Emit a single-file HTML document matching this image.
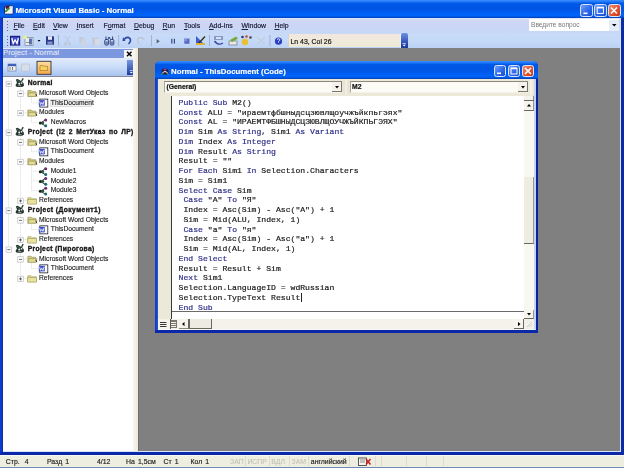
<!DOCTYPE html><html><head><meta charset="utf-8"><style>
*{box-sizing:border-box;margin:0;padding:0}
html,body{width:624px;height:468px;overflow:hidden;background:#808080;font-family:"Liberation Sans",sans-serif}
.a{position:absolute}
svg{position:absolute;overflow:visible}
.xpt{background:linear-gradient(#3d8eff 0,#1a74f6 2px,#0058e6 3.5px,#0055e3 9px,#005ef4 13px,#0066fc 15px,#0058e8 16.5px,#0040b0 18px)}
.ttl{position:absolute;color:#fff;font-weight:bold;white-space:nowrap}
.mi{position:absolute;top:22px;font-size:6.9px;line-height:8px;color:#1a1e3a;white-space:nowrap;-webkit-text-stroke:0.2px currentColor}
.st{position:absolute;top:458px;font-size:6.9px;line-height:8px;color:#202020;white-space:nowrap;word-spacing:1.2px;-webkit-text-stroke:0.15px currentColor}
.st.dis{color:#bcbaae;-webkit-text-stroke:0}
.tr{position:absolute;font-size:6.7px;color:#181818;white-space:nowrap;line-height:8px;-webkit-text-stroke:0.12px currentColor}
.tb{font-weight:bold;-webkit-text-stroke:0.35px currentColor}
.cl{position:absolute;font-family:"Liberation Mono",monospace;font-size:8.125px;color:#1a1a1a;white-space:pre;line-height:9.72px;-webkit-text-stroke:0.2px currentColor}
.k{color:#30308a}
.mi,.st,.tr,.cl,.ttl{will-change:opacity}
.btn{position:absolute;border-radius:2.5px;border:1px solid #dce6fa}
</style></head><body><div class="a xpt" style="left:0px;top:0px;width:624px;height:18px;"></div>
<svg style="left:4px;top:5px" width="10" height="10" viewBox="0 0 10 10"><rect x="0.5" y="0.8" width="8.7" height="8.4" rx="1" fill="#f4f6f0" stroke="#0c2a80" stroke-width="1"/><path d="M1 1 L6 0.8 L5 3.5 L2 4Z" fill="#4a1a40"/><path d="M1.2 6.8 L5.5 2.8" stroke="#3a8a2a" stroke-width="1.8"/><rect x="5.5" y="1.3" width="3.2" height="2" fill="#d0e0f0"/></svg>
<div class="ttl" style="position:absolute;left:15.5px;top:6.0px;font-size:7.9px;line-height:10px;-webkit-text-stroke:0.15px #fff">Microsoft Visual Basic - Normal</div>
<div class="btn" style="left:580px;top:4px;width:12.5px;height:13px;background:linear-gradient(135deg,#70a0ff,#2a64e8 60%,#1a50d0)"></div>
<div class="btn" style="left:594px;top:4px;width:12.5px;height:13px;background:linear-gradient(135deg,#70a0ff,#2a64e8 60%,#1a50d0)"></div>
<div class="btn" style="left:608px;top:4px;width:12.5px;height:13px;background:linear-gradient(135deg,#f09070,#e0502a 60%,#c83818)"></div>
<svg style="left:580px;top:4px" width="40" height="13"><rect x="3.5" y="8.5" width="4" height="1.6" fill="#fff"/><rect x="17.2" y="3.2" width="6.2" height="6.2" fill="none" stroke="#fff" stroke-width="1"/><rect x="17.2" y="3" width="6.2" height="1.4" fill="#fff"/><path d="M31 3.5 L37 9.5 M37 3.5 L31 9.5" stroke="#fff" stroke-width="1.6"/></svg>
<div class="a" style="left:0px;top:18px;width:624px;height:15px;background:linear-gradient(#e0e6fa 0,#d0d6f4 2px,#cad6f4 60%,#c6d8f6)"></div>
<div class="a" style="left:0px;top:33px;width:624px;height:15px;background:linear-gradient(#c8daf8,#c4d9f8 60%,#bcd2f4)"></div>
<div class="a" style="left:0px;top:18px;width:3px;height:437px;background:linear-gradient(90deg,#0a3cd4 0,#0a3cd4 60%,#14287a 100%)"></div>
<div class="a" style="left:619.5px;top:18px;width:2px;height:437px;background:#d8e4f8"></div>
<div class="a" style="left:621.3px;top:18px;width:2.7px;height:437px;background:#0a2aa8"></div>
<div class="a" style="left:6.5px;top:21px;width:1.2px;height:1.2px;background:#5a6aa0"></div>
<div class="a" style="left:6.5px;top:24px;width:1.2px;height:1.2px;background:#5a6aa0"></div>
<div class="a" style="left:6.5px;top:27px;width:1.2px;height:1.2px;background:#5a6aa0"></div>
<div class="a" style="left:6.5px;top:30px;width:1.2px;height:1.2px;background:#5a6aa0"></div>
<div class="a" style="left:6.5px;top:36px;width:1.2px;height:1.2px;background:#5a6aa0"></div>
<div class="a" style="left:6.5px;top:39px;width:1.2px;height:1.2px;background:#5a6aa0"></div>
<div class="a" style="left:6.5px;top:42px;width:1.2px;height:1.2px;background:#5a6aa0"></div>
<div class="a" style="left:6.5px;top:45px;width:1.2px;height:1.2px;background:#5a6aa0"></div>
<div class="mi" style="position:absolute;left:13.5px;top:22px;"><u>F</u>ile</div>
<div class="mi" style="position:absolute;left:33px;top:22px;"><u>E</u>dit</div>
<div class="mi" style="position:absolute;left:53px;top:22px;"><u>V</u>iew</div>
<div class="mi" style="position:absolute;left:76.5px;top:22px;"><u>I</u>nsert</div>
<div class="mi" style="position:absolute;left:103.5px;top:22px;">F<u>o</u>rmat</div>
<div class="mi" style="position:absolute;left:134px;top:22px;"><u>D</u>ebug</div>
<div class="mi" style="position:absolute;left:162.5px;top:22px;"><u>R</u>un</div>
<div class="mi" style="position:absolute;left:184px;top:22px;"><u>T</u>ools</div>
<div class="mi" style="position:absolute;left:209px;top:22px;"><u>A</u>dd-Ins</div>
<div class="mi" style="position:absolute;left:241.5px;top:22px;"><u>W</u>indow</div>
<div class="mi" style="position:absolute;left:274.5px;top:22px;"><u>H</u>elp</div>
<div class="a" style="left:529px;top:19px;width:90px;height:12px;background:#fff"></div>
<div class="mi" style="position:absolute;left:531px;top:21.2px;font-size:6.6px;line-height:8px;color:#7a7a7a;white-space:nowrap;-webkit-text-stroke:0">Введите вопрос</div>
<div class="a" style="left:609px;top:19.5px;width:9.5px;height:11px;background:#e4ecf8"></div>
<svg style="left:612px;top:24px" width="5" height="3"><path d="M0 0 H4.5 L2.25 2.5Z" fill="#000"/></svg>
<svg style="left:0;top:33px" width="300" height="15" viewBox="0 0 300 15">
<g>
<rect x="10" y="2.8" width="10.2" height="9.8" fill="#1a1a78"/>
<rect x="11" y="3.8" width="8.2" height="7.8" fill="#3c46c8"/>
<path d="M11.8 5 L13.2 10.5 L15.1 6.8 L17 10.5 L18.4 5" fill="none" stroke="#fff" stroke-width="1.3"/>
</g>
<g>
<rect x="25" y="4.5" width="8" height="8" fill="#e8ecf4" stroke="#7080a0" stroke-width="0.7"/>
<rect x="29" y="5.5" width="3" height="6" fill="#6070a8"/>
<rect x="26" y="9" width="3" height="1" fill="#80a070"/>
<circle cx="25" cy="4.2" r="2" fill="#e8ec90"/>
</g>
<path d="M37.5 7 H40.5 L39 8.8Z" fill="#000"/>
<g>
<rect x="46" y="3.3" width="8" height="8.4" fill="#2a3a8a"/>
<rect x="48" y="3.3" width="4" height="3.5" fill="#e8e8f8"/>
<rect x="47.5" y="8.5" width="5" height="3.2" fill="#8090c8"/>
</g>
<rect x="58" y="2" width="0.8" height="11" fill="#9aa8c8"/>
<g fill="none" stroke="#bcc4d4" stroke-width="0.9">
<path d="M65 3 L70 11 M70 3 L65 11"/>
<circle cx="65.5" cy="11" r="1.2"/><circle cx="69.5" cy="11" r="1.2"/>
</g>
<g fill="#b4bccc">
<rect x="79" y="4" width="4.5" height="6" fill="#c4ccdc"/><rect x="81.5" y="6.5" width="4.5" height="6" fill="#ccd4e2"/>
</g>
<g fill="#b4bccc">
<rect x="92" y="4.5" width="6" height="7.5" fill="#c4ccdc"/><rect x="95" y="6" width="5" height="6.5" fill="#d4dae6"/>
</g>
<g fill="none" stroke="#1e2c66" stroke-width="0.9">
<rect x="104.8" y="6.5" width="3.6" height="5.5" rx="1"/><rect x="110.2" y="6.5" width="3.6" height="5.5" rx="1"/><path d="M106 6.5 V3.5 M108 6.5 L109 4 L110.6 6.5 M112.6 6.5 V3.5"/>
</g><rect x="105.3" y="8.5" width="2.6" height="3" fill="#6a7ab0"/><rect x="110.7" y="8.5" width="2.6" height="3" fill="#6a7ab0"/>
<rect x="118.3" y="2" width="0.8" height="11" fill="#9aa8c8"/>
<path d="M124 6.5 Q127 3 130 5.5 Q131.5 8 128.5 11" fill="none" stroke="#2a46a8" stroke-width="1.6"/>
<path d="M123 4 L125.5 8 L122.5 8Z" fill="#2a46a8"/>
<path d="M144 6.5 Q141 3 138 5.5 Q136.5 8 139.5 11" fill="none" stroke="#bcc4d8" stroke-width="1.3"/>
<rect x="151.2" y="2" width="0.8" height="11" fill="#9aa8c8"/>
<path d="M156.6 6 L159.8 8.2 L156.6 10.4Z" fill="#5a6478"/>
<rect x="171.2" y="5.8" width="1.2" height="4.8" fill="#3a4a80"/><rect x="173.8" y="5.8" width="1.2" height="4.8" fill="#3a4a80"/>
<rect x="184.3" y="5.6" width="5.2" height="5.2" fill="#5a6ac8"/><rect x="184.3" y="5.6" width="2.5" height="2.5" fill="#8898e0"/>
<path d="M196 3 V12 H205 Z" fill="#3a5ad8"/>
<path d="M198 11 L205 3.5" stroke="#303010" stroke-width="1.4"/>
<rect x="196" y="10" width="9" height="2" fill="#e0b030"/>
<rect x="209.2" y="2" width="0.8" height="11" fill="#9aa8c8"/>
<g>
<rect x="214" y="3" width="9" height="4" fill="#8898c8"/>
<path d="M214.5 8 Q218 13 223 10" fill="none" stroke="#3a4aa0" stroke-width="1.4"/>
<rect x="216" y="4" width="5" height="2" fill="#d8e0f0"/>
</g>
<g>
<rect x="229" y="8" width="8" height="4" fill="#e8e8e0" stroke="#5a6a80" stroke-width="0.6"/>
<path d="M230 7 L236 3.5 L238 5.5 L232 9Z" fill="#78a838"/>
</g>
<g>
<circle cx="245" cy="9" r="3.2" fill="#e8c030"/>
<circle cx="242.5" cy="4" r="1.3" fill="#2a3a8a"/><circle cx="246.5" cy="3.5" r="1.3" fill="#c05030"/><circle cx="250.5" cy="4.5" r="1.3" fill="#604040"/>
</g>
<g fill="none" stroke="#c4ccdc" stroke-width="1.1">
<path d="M257 4 L265 11 M265 4 L257 11"/>
</g>
<rect x="269.5" y="2" width="0.8" height="11" fill="#9aa8c8"/>
<circle cx="278.5" cy="8.2" r="3.6" fill="#2840c0"/>
<path d="M277 6.5 Q278.5 5 280 6.5 Q280 7.5 278.5 8.5 V9.5" fill="none" stroke="#fff" stroke-width="0.9"/>
</svg>
<div class="a" style="left:288.3px;top:34.1px;width:112px;height:12.5px;background:linear-gradient(#f2e6dc,#f0eadc 50%,#ece8d6);border-left:0.8px solid #d8d4c4"></div>
<div class="a" style="left:400.3px;top:33.5px;width:1px;height:14.5px;background:#eef2fa"></div>
<div class="mi" style="position:absolute;left:290.5px;top:38.0px;font-size:6.9px;line-height:8px;white-space:nowrap;color:#1a1a1a">Ln 43, Col 26</div>
<div class="a" style="left:401px;top:32.9px;width:7px;height:15.4px;background:linear-gradient(#6e90e0,#2a4cb0 70%,#1a3898);border-radius:2px 2px 0 0"></div>
<svg style="left:402.3px;top:42.5px" width="5" height="5"><path d="M0.5 0.5 H3.8" stroke="#fff" stroke-width="0.7"/><path d="M0.6 1.8 H3.8 L2.2 3.6Z" fill="#fff"/></svg>
<div class="a" style="left:3px;top:48px;width:131px;height:10px;background:#7b97df"></div>
<div class="" style="position:absolute;left:3px;top:49.2px;font-size:7.75px;line-height:8px;color:#eef0fa;white-space:nowrap">Project - Normal</div>
<div class="a" style="left:124px;top:49.5px;width:9.5px;height:8.5px;background:#f6f6f6"></div>
<svg style="left:125.5px;top:51px" width="7" height="6"><path d="M1 0.8 L5.5 5.2 M5.5 0.8 L1 5.2" stroke="#000" stroke-width="1.5"/></svg>
<div class="a" style="left:3px;top:47.8px;width:131px;height:1px;background:#e4ecfa"></div>
<div class="a" style="left:3px;top:58px;width:131px;height:17.5px;background:linear-gradient(#e2ebfc,#cadcf8 50%,#a7c3ee)"></div>
<div class="a" style="left:127.4px;top:60px;width:6.4px;height:15px;background:linear-gradient(#7898e0,#1e3c9c);border-radius:0 2px 2px 0"></div>
<svg style="left:128.5px;top:69.5px" width="5" height="5"><path d="M0.8 0.6 H3.8" stroke="#fff" stroke-width="0.7"/><path d="M0.8 2 H3.8 L2.3 3.6Z" fill="#fff"/></svg>
<div class="a" style="left:3px;top:75.5px;width:130px;height:376px;background:#fff"></div>
<div class="a" style="left:3px;top:75.5px;width:131px;height:1px;background:#8a8aa0"></div>
<svg style="left:0;top:58px" width="60" height="18" viewBox="0 0 60 18">
<rect x="8" y="6" width="8" height="7" fill="#f4f0e0" stroke="#5870b0" stroke-width="0.6"/>
<rect x="8" y="6" width="8" height="2.2" fill="#4060c0"/>
<rect x="9.5" y="9" width="1" height="3" fill="#7080a0"/><rect x="12" y="9" width="1" height="3" fill="#7080a0"/>
<rect x="21.5" y="6" width="8" height="7" fill="#d8dee8" stroke="#b8c0d0" stroke-width="0.6"/>
<rect x="37" y="3.3" width="14" height="13" fill="url(#og)" stroke="#303040" stroke-width="0.9"/>
<defs><linearGradient id="og" x1="0" y1="0" x2="0" y2="1"><stop offset="0" stop-color="#ffe0a0"/><stop offset="1" stop-color="#f4a848"/></linearGradient></defs>
<path d="M40 7.5 H43 L44 8.3 H47.5 V12.5 H40Z" fill="#f8d060" stroke="#806020" stroke-width="0.5"/>
</svg>
<div class="a" style="left:133px;top:48px;width:5px;height:403.5px;background:linear-gradient(90deg,#f8f6ee,#eee9dc)"></div>
<div class="a" style="left:137.6px;top:48px;width:0.9px;height:403.5px;background:#707068"></div>
<div class="a" style="left:155px;top:61px;width:383px;height:272.2px;background:linear-gradient(90deg,#0a38c4,#2a5ad8 3.5px,#0842d6 4px);border-radius:5px 5px 0 0"></div>
<div class="a xpt" style="left:155px;top:61px;width:383px;height:18px;border-radius:5px 5px 0 0"></div>
<svg style="left:161px;top:66.5px" width="9" height="9"><path d="M0.8 2.5 Q4 0.5 7.2 2.5 L7.5 7.5 L0.5 7.5Z" fill="#281c3c"/><path d="M2 2.2 Q4 1 6 2.2 L4 4Z" fill="#8a3a9a"/><path d="M1.5 5.5 Q4 3.5 6.5 5.5" stroke="#f0f0f0" stroke-width="1" fill="none"/><path d="M0.5 7.5 L2.5 6 M7.5 7.5 L5.5 6" stroke="#70c060" stroke-width="1"/></svg>
<div class="ttl" style="position:absolute;left:171px;top:66.8px;font-size:7.8px;line-height:9px;-webkit-text-stroke:0.15px #fff">Normal - ThisDocument (Code)</div>
<div class="btn" style="left:494px;top:65.3px;width:12px;height:12px;background:linear-gradient(135deg,#70a0ff,#2a64e8 60%,#1a50d0)"></div>
<div class="btn" style="left:508px;top:65.3px;width:12px;height:12px;background:linear-gradient(135deg,#70a0ff,#2a64e8 60%,#1a50d0)"></div>
<div class="btn" style="left:522px;top:65.3px;width:12px;height:12px;background:linear-gradient(135deg,#f09070,#e0502a 60%,#c83818)"></div>
<svg style="left:494px;top:65.3px" width="40" height="12"><rect x="3" y="7.5" width="4" height="1.6" fill="#fff"/><rect x="17" y="3" width="6" height="6" fill="none" stroke="#fff" stroke-width="1"/><rect x="17" y="2.8" width="6" height="1.4" fill="#fff"/><path d="M31 3 L37 9 M37 3 L31 9" stroke="#fff" stroke-width="1.6"/></svg>
<div class="a" style="left:158px;top:79px;width:377px;height:252px;background:#ece9d8"></div>
<div class="a" style="left:533.8px;top:79px;width:2.2px;height:252px;background:#c4d2fc"></div>
<div class="a" style="left:536px;top:79px;width:2.2px;height:254.2px;background:#0a24a0"></div>
<div class="a" style="left:158px;top:329.2px;width:378px;height:1.2px;background:#dde6fc"></div>
<div class="a" style="left:155px;top:330.4px;width:383px;height:2.8px;background:#0a28a8"></div>
<div class="a" style="left:164px;top:81px;width:178px;height:11.5px;background:#fcfbf6;border-top:1px solid #8a887c;border-left:1px solid #a8a69a;border-bottom:1px solid #f4f2ea"></div>
<div class="mi" style="position:absolute;left:166.5px;top:82.8px;font-size:6.8px;line-height:8px;font-weight:bold;white-space:nowrap;color:#101010;-webkit-text-stroke:0.2px #101010">(General)</div>
<div class="a" style="left:349.5px;top:81px;width:178.5px;height:11.5px;background:#fcfbf6;border-top:1px solid #8a887c;border-left:1px solid #a8a69a;border-bottom:1px solid #f4f2ea"></div>
<div class="mi" style="position:absolute;left:352.0px;top:82.8px;font-size:6.8px;line-height:8px;font-weight:bold;white-space:nowrap;color:#101010;-webkit-text-stroke:0.2px #101010">M2</div>
<div class="a" style="left:331.5px;top:81.8px;width:10px;height:10.5px;background:#f4f2ea;border-right:1px solid #7a786c;border-bottom:1px solid #7a786c"></div>
<svg style="left:334.5px;top:85.5px" width="5" height="3"><path d="M0 0 H4 L2 2.5Z" fill="#000"/></svg>
<div class="a" style="left:518px;top:81.8px;width:10px;height:10.5px;background:#f4f2ea;border-right:1px solid #7a786c;border-bottom:1px solid #7a786c"></div>
<svg style="left:521px;top:85.5px" width="5" height="3"><path d="M0 0 H4 L2 2.5Z" fill="#000"/></svg>
<div class="a" style="left:342px;top:80px;width:7.5px;height:14px;background:#e8e5d6"></div>
<div class="a" style="left:344.5px;top:80px;width:2px;height:14px;background:#f2f0e6"></div>
<div class="a" style="left:529.5px;top:80px;width:2px;height:15px;background:#f4f2ea"></div>
<div class="a" style="left:158px;top:95.5px;width:376px;height:0.9px;background:#6a685e"></div>
<div class="a" style="left:158px;top:96.3px;width:13.5px;height:223px;background:#ece9d8"></div>
<div class="a" style="left:171.2px;top:96.3px;width:1px;height:223px;background:#3a3a3a"></div>
<div class="a" style="left:172.2px;top:96.3px;width:352px;height:223px;background:#fff"></div>
<div class="a" style="left:172.2px;top:310.9px;width:351.5px;height:0.8px;background:#6a6a6a"></div>
<div class="a" style="left:524px;top:96.3px;width:10px;height:223px;background:#f8f7f0"></div>
<div class="a" style="left:524px;top:96.3px;width:9.5px;height:4.5px;background:#f4f2ea;border-bottom:1px solid #6a685e;border-right:1px solid #8a887c"></div>
<div class="a" style="left:524px;top:101px;width:9.5px;height:9.8px;background:#f6f4ec;border-right:1px solid #9a988c;border-bottom:1px solid #6a685e"></div>
<svg style="left:526.8px;top:104.3px" width="5" height="3"><path d="M0 2.5 H4 L2 0Z" fill="#000"/></svg>
<div class="a" style="left:524px;top:177px;width:9.8px;height:66.5px;background:#efede2;border-right:1px solid #9a988c;border-bottom:1px solid #6a685e"></div>
<div class="a" style="left:524px;top:309.5px;width:9.5px;height:9.5px;background:#f6f4ec;border-right:1px solid #9a988c;border-bottom:1px solid #6a685e"></div>
<svg style="left:526.8px;top:312.8px" width="5" height="3"><path d="M0 0 H4 L2 2.5Z" fill="#000"/></svg>
<div class="a" style="left:158px;top:319.3px;width:366px;height:9.5px;background:#f4f2ea"></div>
<div class="a" style="left:158px;top:328.8px;width:376px;height:1.5px;background:#f8f7f2"></div>
<svg style="left:158px;top:319px" width="20" height="10"><path d="M2 3.5 H8.5 M2 5.5 H8.5 M2 7.5 H8.5" stroke="#383838" stroke-width="1"/><rect x="12" y="1" width="7" height="8" fill="#7a786c"/><path d="M13 3.5 H18 M13 5.5 H18 M13 7.5 H18" stroke="#f4f4ec" stroke-width="1"/></svg>
<div class="a" style="left:169.5px;top:319.3px;width:1px;height:9.5px;background:#5a5a5a"></div>
<div class="a" style="left:179px;top:319.3px;width:10.3px;height:9.5px;background:#f6f4ec;border-right:1px solid #6a685e;border-bottom:1px solid #8a887c"></div>
<svg style="left:182.3px;top:321.8px" width="3" height="5"><path d="M2.5 0 V4.2 L0 2.1Z" fill="#000"/></svg>
<div class="a" style="left:189.3px;top:319.3px;width:22.5px;height:9.5px;background:#eeece2;border-left:1px solid #6a685e;border-right:1px solid #6a685e;border-bottom:1px solid #6a685e"></div>
<div class="a" style="left:514.2px;top:319.3px;width:10px;height:9.8px;background:#f6f4ec;border-right:1px solid #6a685e;border-bottom:1px solid #6a685e"></div>
<svg style="left:518.3px;top:321.8px" width="3" height="5"><path d="M0 0 V4.2 L2.5 2.1Z" fill="#000"/></svg>
<div class="a" style="left:524.2px;top:319.3px;width:9.8px;height:9.8px;background:#f2f0e8"></div>
<svg style="left:526px;top:321px" width="7" height="7"><path d="M6 1 L1 6 M6 3.5 L3.5 6" stroke="#c8c4b4" stroke-width="0.8"/></svg>
<div class="cl" style="position:absolute;left:178.6px;top:97.8px;"><span class="k">Public</span> <span class="k">Sub</span> M2()</div>
<div class="cl" style="position:absolute;left:178.6px;top:107.55px;"><span class="k">Const</span> ALU = &quot;ираемтфбшныдсцзювлщоучжъйкпьгэях&quot;</div>
<div class="cl" style="position:absolute;left:178.6px;top:117.3px;"><span class="k">Const</span> AL = &quot;ИРАЕМТФБШНЫДСЦЗЮВЛЩОУЧЖЪЙКПЬГЭЯХ&quot;</div>
<div class="cl" style="position:absolute;left:178.6px;top:127.05px;"><span class="k">Dim</span> Sim <span class="k">As</span> <span class="k">String</span>, Sim1 <span class="k">As</span> <span class="k">Variant</span></div>
<div class="cl" style="position:absolute;left:178.6px;top:136.8px;"><span class="k">Dim</span> Index <span class="k">As</span> <span class="k">Integer</span></div>
<div class="cl" style="position:absolute;left:178.6px;top:146.55px;"><span class="k">Dim</span> Result <span class="k">As</span> <span class="k">String</span></div>
<div class="cl" style="position:absolute;left:178.6px;top:156.3px;">Result = &quot;&quot;</div>
<div class="cl" style="position:absolute;left:178.6px;top:166.05px;"><span class="k">For</span> <span class="k">Each</span> Sim1 <span class="k">In</span> Selection.Characters</div>
<div class="cl" style="position:absolute;left:178.6px;top:175.8px;">Sim = Sim1</div>
<div class="cl" style="position:absolute;left:178.6px;top:185.55px;"><span class="k">Select</span> <span class="k">Case</span> Sim</div>
<div class="cl" style="position:absolute;left:178.6px;top:195.3px;"> <span class="k">Case</span> &quot;А&quot; <span class="k">To</span> &quot;Я&quot;</div>
<div class="cl" style="position:absolute;left:178.6px;top:205.05px;"> Index = Asc(Sim) - Asc(&quot;А&quot;) + 1</div>
<div class="cl" style="position:absolute;left:178.6px;top:214.8px;"> Sim = Mid(ALU, Index, 1)</div>
<div class="cl" style="position:absolute;left:178.6px;top:224.55px;"> <span class="k">Case</span> &quot;а&quot; <span class="k">To</span> &quot;я&quot;</div>
<div class="cl" style="position:absolute;left:178.6px;top:234.3px;"> Index = Asc(Sim) - Asc(&quot;а&quot;) + 1</div>
<div class="cl" style="position:absolute;left:178.6px;top:244.05px;"> Sim = Mid(AL, Index, 1)</div>
<div class="cl" style="position:absolute;left:178.6px;top:253.8px;"><span class="k">End</span> <span class="k">Select</span></div>
<div class="cl" style="position:absolute;left:178.6px;top:263.55px;">Result = Result + Sim</div>
<div class="cl" style="position:absolute;left:178.6px;top:273.3px;"><span class="k">Next</span> Sim1</div>
<div class="cl" style="position:absolute;left:178.6px;top:283.05px;">Selection.LanguageID = wdRussian</div>
<div class="cl" style="position:absolute;left:178.6px;top:292.8px;">Selection.TypeText Result</div>
<div class="cl" style="position:absolute;left:178.6px;top:302.55px;"><span class="k">End</span> <span class="k">Sub</span></div>
<div class="a" style="left:300.77500000000003px;top:293.0px;width:0.7px;height:9.3px;background:#222"></div>
<div class="a" style="left:50px;top:98.7px;width:42px;height:8.3px;background:#f0f0f0;border:0.6px solid #e0e0e0"></div>
<svg style="left:0;top:0" width="140" height="300" viewBox="0 0 140 300"><line x1="8.5" y1="86.4" x2="8.5" y2="246.15" stroke="#dcdcdc" stroke-width="0.8" stroke-dasharray="1 0.5"/><line x1="20.5" y1="87.4" x2="20.5" y2="109.65" stroke="#dcdcdc" stroke-width="0.8" stroke-dasharray="1 0.5"/><line x1="23.5" y1="93.15" x2="27.5" y2="93.15" stroke="#dcdcdc" stroke-width="0.8" stroke-dasharray="1 0.5"/><line x1="31.5" y1="97.15" x2="31.5" y2="102.9" stroke="#dcdcdc" stroke-width="0.8" stroke-dasharray="1 0.5"/><line x1="31.5" y1="102.9" x2="38" y2="102.9" stroke="#dcdcdc" stroke-width="0.8" stroke-dasharray="1 0.5"/><line x1="23.5" y1="112.65" x2="27.5" y2="112.65" stroke="#dcdcdc" stroke-width="0.8" stroke-dasharray="1 0.5"/><line x1="31.5" y1="116.65" x2="31.5" y2="122.4" stroke="#dcdcdc" stroke-width="0.8" stroke-dasharray="1 0.5"/><line x1="31.5" y1="122.4" x2="38" y2="122.4" stroke="#dcdcdc" stroke-width="0.8" stroke-dasharray="1 0.5"/><line x1="20.5" y1="136.15" x2="20.5" y2="197.4" stroke="#dcdcdc" stroke-width="0.8" stroke-dasharray="1 0.5"/><line x1="23.5" y1="141.9" x2="27.5" y2="141.9" stroke="#dcdcdc" stroke-width="0.8" stroke-dasharray="1 0.5"/><line x1="31.5" y1="145.9" x2="31.5" y2="151.65" stroke="#dcdcdc" stroke-width="0.8" stroke-dasharray="1 0.5"/><line x1="31.5" y1="151.65" x2="38" y2="151.65" stroke="#dcdcdc" stroke-width="0.8" stroke-dasharray="1 0.5"/><line x1="23.5" y1="161.4" x2="27.5" y2="161.4" stroke="#dcdcdc" stroke-width="0.8" stroke-dasharray="1 0.5"/><line x1="31.5" y1="165.4" x2="31.5" y2="190.65" stroke="#dcdcdc" stroke-width="0.8" stroke-dasharray="1 0.5"/><line x1="31.5" y1="171.15" x2="38" y2="171.15" stroke="#dcdcdc" stroke-width="0.8" stroke-dasharray="1 0.5"/><line x1="31.5" y1="180.9" x2="38" y2="180.9" stroke="#dcdcdc" stroke-width="0.8" stroke-dasharray="1 0.5"/><line x1="31.5" y1="190.65" x2="38" y2="190.65" stroke="#dcdcdc" stroke-width="0.8" stroke-dasharray="1 0.5"/><line x1="23.5" y1="200.4" x2="27.5" y2="200.4" stroke="#dcdcdc" stroke-width="0.8" stroke-dasharray="1 0.5"/><line x1="20.5" y1="214.15" x2="20.5" y2="236.4" stroke="#dcdcdc" stroke-width="0.8" stroke-dasharray="1 0.5"/><line x1="23.5" y1="219.9" x2="27.5" y2="219.9" stroke="#dcdcdc" stroke-width="0.8" stroke-dasharray="1 0.5"/><line x1="31.5" y1="223.9" x2="31.5" y2="229.65" stroke="#dcdcdc" stroke-width="0.8" stroke-dasharray="1 0.5"/><line x1="31.5" y1="229.65" x2="38" y2="229.65" stroke="#dcdcdc" stroke-width="0.8" stroke-dasharray="1 0.5"/><line x1="23.5" y1="239.4" x2="27.5" y2="239.4" stroke="#dcdcdc" stroke-width="0.8" stroke-dasharray="1 0.5"/><line x1="20.5" y1="253.15" x2="20.5" y2="275.4" stroke="#dcdcdc" stroke-width="0.8" stroke-dasharray="1 0.5"/><line x1="23.5" y1="258.9" x2="27.5" y2="258.9" stroke="#dcdcdc" stroke-width="0.8" stroke-dasharray="1 0.5"/><line x1="31.5" y1="262.9" x2="31.5" y2="268.65" stroke="#dcdcdc" stroke-width="0.8" stroke-dasharray="1 0.5"/><line x1="31.5" y1="268.65" x2="38" y2="268.65" stroke="#dcdcdc" stroke-width="0.8" stroke-dasharray="1 0.5"/><line x1="23.5" y1="278.4" x2="27.5" y2="278.4" stroke="#dcdcdc" stroke-width="0.8" stroke-dasharray="1 0.5"/><rect x="6.1000000000000005" y="81.2" width="5.4" height="5.4" fill="#fff" stroke="#b0b0b8" stroke-width="0.6"/><line x1="7.300000000000001" y1="83.9" x2="10.3" y2="83.9" stroke="#303030" stroke-width="0.7"/><g transform="translate(14.8,78.9)"><path d="M8.4 -0.6 L6.8 2.2" stroke="#2a4a30" stroke-width="1.4"/><path d="M1 0.6 L2.8 0 L7.5 2.8 Q9.4 4.5 9.2 6.5 Q8.6 8.2 5 8.2 Q1 8.2 0.8 6.6 Q0.8 5 2.2 4 Z" fill="#263430"/><path d="M1.8 1.2 L5.5 3.6" stroke="#4a7a5a" stroke-width="0.8"/><circle cx="4.4" cy="4.9" r="0.95" fill="#f4f8f4"/><circle cx="6.8" cy="4.1" r="0.85" fill="#f4f8f4"/><path d="M3.4 6.8 H6.6" stroke="#a8bcb0" stroke-width="0.7"/></g><rect x="17.8" y="90.95" width="5.4" height="5.4" fill="#fff" stroke="#b0b0b8" stroke-width="0.6"/><line x1="19.0" y1="93.65" x2="22.0" y2="93.65" stroke="#303030" stroke-width="0.7"/><g transform="translate(27.3,88.95)"><path d="M0.5 1.5 H3.8 L4.8 2.5 H8.5 V7.5 H0.5Z" fill="#ccc680" stroke="#8a8448" stroke-width="0.5"/><path d="M1.8 4 H9.8 L8.5 7.5 H0.5Z" fill="#e2dc98" stroke="#8a8448" stroke-width="0.5"/><path d="M8.5 5 L9.5 7.5" stroke="#303020" stroke-width="1"/></g><g transform="translate(38.3,98.60000000000001)"><rect x="1.5" y="0.5" width="8" height="8" fill="#fff" stroke="#202030" stroke-width="0.8"/><rect x="0.5" y="1.5" width="6" height="5.5" fill="#4050c8"/><path d="M1.3 2.5 L2.3 6 L3.5 3.8 L4.7 6 L5.7 2.5" fill="none" stroke="#fff" stroke-width="0.8"/></g><rect x="17.8" y="110.45" width="5.4" height="5.4" fill="#fff" stroke="#b0b0b8" stroke-width="0.6"/><line x1="19.0" y1="113.15" x2="22.0" y2="113.15" stroke="#303030" stroke-width="0.7"/><g transform="translate(27.3,108.45)"><path d="M0.5 1.5 H3.8 L4.8 2.5 H8.5 V7.5 H0.5Z" fill="#ccc680" stroke="#8a8448" stroke-width="0.5"/><path d="M1.8 4 H9.8 L8.5 7.5 H0.5Z" fill="#e2dc98" stroke="#8a8448" stroke-width="0.5"/><path d="M8.5 5 L9.5 7.5" stroke="#303020" stroke-width="1"/></g><g transform="translate(38.5,118.10000000000001)"><path d="M1.8 5 L7 1.8 M1.8 5 L7 7.8" stroke="#304040" stroke-width="1"/><circle cx="1.8" cy="5" r="1.5" fill="#1a2420"/><circle cx="4.4" cy="4.8" r="1.3" fill="#2a5a40"/><circle cx="7.2" cy="1.9" r="1.5" fill="#6a2a6a"/><circle cx="7.2" cy="7.6" r="1.5" fill="#1a6a6a"/></g><rect x="6.1000000000000005" y="129.95000000000002" width="5.4" height="5.4" fill="#fff" stroke="#b0b0b8" stroke-width="0.6"/><line x1="7.300000000000001" y1="132.65" x2="10.3" y2="132.65" stroke="#303030" stroke-width="0.7"/><g transform="translate(14.8,127.65)"><path d="M8.4 -0.6 L6.8 2.2" stroke="#2a4a30" stroke-width="1.4"/><path d="M1 0.6 L2.8 0 L7.5 2.8 Q9.4 4.5 9.2 6.5 Q8.6 8.2 5 8.2 Q1 8.2 0.8 6.6 Q0.8 5 2.2 4 Z" fill="#263430"/><path d="M1.8 1.2 L5.5 3.6" stroke="#4a7a5a" stroke-width="0.8"/><circle cx="4.4" cy="4.9" r="0.95" fill="#f4f8f4"/><circle cx="6.8" cy="4.1" r="0.85" fill="#f4f8f4"/><path d="M3.4 6.8 H6.6" stroke="#a8bcb0" stroke-width="0.7"/></g><rect x="17.8" y="139.70000000000002" width="5.4" height="5.4" fill="#fff" stroke="#b0b0b8" stroke-width="0.6"/><line x1="19.0" y1="142.4" x2="22.0" y2="142.4" stroke="#303030" stroke-width="0.7"/><g transform="translate(27.3,137.70000000000002)"><path d="M0.5 1.5 H3.8 L4.8 2.5 H8.5 V7.5 H0.5Z" fill="#ccc680" stroke="#8a8448" stroke-width="0.5"/><path d="M1.8 4 H9.8 L8.5 7.5 H0.5Z" fill="#e2dc98" stroke="#8a8448" stroke-width="0.5"/><path d="M8.5 5 L9.5 7.5" stroke="#303020" stroke-width="1"/></g><g transform="translate(38.3,147.35)"><rect x="1.5" y="0.5" width="8" height="8" fill="#fff" stroke="#202030" stroke-width="0.8"/><rect x="0.5" y="1.5" width="6" height="5.5" fill="#4050c8"/><path d="M1.3 2.5 L2.3 6 L3.5 3.8 L4.7 6 L5.7 2.5" fill="none" stroke="#fff" stroke-width="0.8"/></g><rect x="17.8" y="159.20000000000002" width="5.4" height="5.4" fill="#fff" stroke="#b0b0b8" stroke-width="0.6"/><line x1="19.0" y1="161.9" x2="22.0" y2="161.9" stroke="#303030" stroke-width="0.7"/><g transform="translate(27.3,157.20000000000002)"><path d="M0.5 1.5 H3.8 L4.8 2.5 H8.5 V7.5 H0.5Z" fill="#ccc680" stroke="#8a8448" stroke-width="0.5"/><path d="M1.8 4 H9.8 L8.5 7.5 H0.5Z" fill="#e2dc98" stroke="#8a8448" stroke-width="0.5"/><path d="M8.5 5 L9.5 7.5" stroke="#303020" stroke-width="1"/></g><g transform="translate(38.5,166.85)"><path d="M1.8 5 L7 1.8 M1.8 5 L7 7.8" stroke="#304040" stroke-width="1"/><circle cx="1.8" cy="5" r="1.5" fill="#1a2420"/><circle cx="4.4" cy="4.8" r="1.3" fill="#2a5a40"/><circle cx="7.2" cy="1.9" r="1.5" fill="#6a2a6a"/><circle cx="7.2" cy="7.6" r="1.5" fill="#1a6a6a"/></g><g transform="translate(38.5,176.6)"><path d="M1.8 5 L7 1.8 M1.8 5 L7 7.8" stroke="#304040" stroke-width="1"/><circle cx="1.8" cy="5" r="1.5" fill="#1a2420"/><circle cx="4.4" cy="4.8" r="1.3" fill="#2a5a40"/><circle cx="7.2" cy="1.9" r="1.5" fill="#6a2a6a"/><circle cx="7.2" cy="7.6" r="1.5" fill="#1a6a6a"/></g><g transform="translate(38.5,186.35)"><path d="M1.8 5 L7 1.8 M1.8 5 L7 7.8" stroke="#304040" stroke-width="1"/><circle cx="1.8" cy="5" r="1.5" fill="#1a2420"/><circle cx="4.4" cy="4.8" r="1.3" fill="#2a5a40"/><circle cx="7.2" cy="1.9" r="1.5" fill="#6a2a6a"/><circle cx="7.2" cy="7.6" r="1.5" fill="#1a6a6a"/></g><rect x="17.8" y="198.20000000000002" width="5.4" height="5.4" fill="#fff" stroke="#b0b0b8" stroke-width="0.6"/><line x1="19.0" y1="200.9" x2="22.0" y2="200.9" stroke="#303030" stroke-width="0.7"/><line x1="20.5" y1="199.4" x2="20.5" y2="202.4" stroke="#303030" stroke-width="0.7"/><g transform="translate(27.3,196.20000000000002)"><path d="M0.5 1.5 H3.8 L4.8 2.5 H9 V7.8 H0.5Z" fill="#dcd68a" stroke="#9a9450" stroke-width="0.5"/><rect x="0.5" y="3.5" width="8.5" height="4.3" fill="#e8e29a" stroke="#9a9450" stroke-width="0.5"/></g><rect x="6.1000000000000005" y="207.95000000000002" width="5.4" height="5.4" fill="#fff" stroke="#b0b0b8" stroke-width="0.6"/><line x1="7.300000000000001" y1="210.65" x2="10.3" y2="210.65" stroke="#303030" stroke-width="0.7"/><g transform="translate(14.8,205.65)"><path d="M8.4 -0.6 L6.8 2.2" stroke="#2a4a30" stroke-width="1.4"/><path d="M1 0.6 L2.8 0 L7.5 2.8 Q9.4 4.5 9.2 6.5 Q8.6 8.2 5 8.2 Q1 8.2 0.8 6.6 Q0.8 5 2.2 4 Z" fill="#263430"/><path d="M1.8 1.2 L5.5 3.6" stroke="#4a7a5a" stroke-width="0.8"/><circle cx="4.4" cy="4.9" r="0.95" fill="#f4f8f4"/><circle cx="6.8" cy="4.1" r="0.85" fill="#f4f8f4"/><path d="M3.4 6.8 H6.6" stroke="#a8bcb0" stroke-width="0.7"/></g><rect x="17.8" y="217.70000000000002" width="5.4" height="5.4" fill="#fff" stroke="#b0b0b8" stroke-width="0.6"/><line x1="19.0" y1="220.4" x2="22.0" y2="220.4" stroke="#303030" stroke-width="0.7"/><g transform="translate(27.3,215.70000000000002)"><path d="M0.5 1.5 H3.8 L4.8 2.5 H8.5 V7.5 H0.5Z" fill="#ccc680" stroke="#8a8448" stroke-width="0.5"/><path d="M1.8 4 H9.8 L8.5 7.5 H0.5Z" fill="#e2dc98" stroke="#8a8448" stroke-width="0.5"/><path d="M8.5 5 L9.5 7.5" stroke="#303020" stroke-width="1"/></g><g transform="translate(38.3,225.35)"><rect x="1.5" y="0.5" width="8" height="8" fill="#fff" stroke="#202030" stroke-width="0.8"/><rect x="0.5" y="1.5" width="6" height="5.5" fill="#4050c8"/><path d="M1.3 2.5 L2.3 6 L3.5 3.8 L4.7 6 L5.7 2.5" fill="none" stroke="#fff" stroke-width="0.8"/></g><rect x="17.8" y="237.20000000000002" width="5.4" height="5.4" fill="#fff" stroke="#b0b0b8" stroke-width="0.6"/><line x1="19.0" y1="239.9" x2="22.0" y2="239.9" stroke="#303030" stroke-width="0.7"/><line x1="20.5" y1="238.4" x2="20.5" y2="241.4" stroke="#303030" stroke-width="0.7"/><g transform="translate(27.3,235.20000000000002)"><path d="M0.5 1.5 H3.8 L4.8 2.5 H9 V7.8 H0.5Z" fill="#dcd68a" stroke="#9a9450" stroke-width="0.5"/><rect x="0.5" y="3.5" width="8.5" height="4.3" fill="#e8e29a" stroke="#9a9450" stroke-width="0.5"/></g><rect x="6.1000000000000005" y="246.95000000000002" width="5.4" height="5.4" fill="#fff" stroke="#b0b0b8" stroke-width="0.6"/><line x1="7.300000000000001" y1="249.65" x2="10.3" y2="249.65" stroke="#303030" stroke-width="0.7"/><g transform="translate(14.8,244.65)"><path d="M8.4 -0.6 L6.8 2.2" stroke="#2a4a30" stroke-width="1.4"/><path d="M1 0.6 L2.8 0 L7.5 2.8 Q9.4 4.5 9.2 6.5 Q8.6 8.2 5 8.2 Q1 8.2 0.8 6.6 Q0.8 5 2.2 4 Z" fill="#263430"/><path d="M1.8 1.2 L5.5 3.6" stroke="#4a7a5a" stroke-width="0.8"/><circle cx="4.4" cy="4.9" r="0.95" fill="#f4f8f4"/><circle cx="6.8" cy="4.1" r="0.85" fill="#f4f8f4"/><path d="M3.4 6.8 H6.6" stroke="#a8bcb0" stroke-width="0.7"/></g><rect x="17.8" y="256.7" width="5.4" height="5.4" fill="#fff" stroke="#b0b0b8" stroke-width="0.6"/><line x1="19.0" y1="259.4" x2="22.0" y2="259.4" stroke="#303030" stroke-width="0.7"/><g transform="translate(27.3,254.7)"><path d="M0.5 1.5 H3.8 L4.8 2.5 H8.5 V7.5 H0.5Z" fill="#ccc680" stroke="#8a8448" stroke-width="0.5"/><path d="M1.8 4 H9.8 L8.5 7.5 H0.5Z" fill="#e2dc98" stroke="#8a8448" stroke-width="0.5"/><path d="M8.5 5 L9.5 7.5" stroke="#303020" stroke-width="1"/></g><g transform="translate(38.3,264.34999999999997)"><rect x="1.5" y="0.5" width="8" height="8" fill="#fff" stroke="#202030" stroke-width="0.8"/><rect x="0.5" y="1.5" width="6" height="5.5" fill="#4050c8"/><path d="M1.3 2.5 L2.3 6 L3.5 3.8 L4.7 6 L5.7 2.5" fill="none" stroke="#fff" stroke-width="0.8"/></g><rect x="17.8" y="276.2" width="5.4" height="5.4" fill="#fff" stroke="#b0b0b8" stroke-width="0.6"/><line x1="19.0" y1="278.9" x2="22.0" y2="278.9" stroke="#303030" stroke-width="0.7"/><line x1="20.5" y1="277.4" x2="20.5" y2="280.4" stroke="#303030" stroke-width="0.7"/><g transform="translate(27.3,274.2)"><path d="M0.5 1.5 H3.8 L4.8 2.5 H9 V7.8 H0.5Z" fill="#dcd68a" stroke="#9a9450" stroke-width="0.5"/><rect x="0.5" y="3.5" width="8.5" height="4.3" fill="#e8e29a" stroke="#9a9450" stroke-width="0.5"/></g></svg>
<div class="tr tb" style="position:absolute;left:27.7px;top:79.2px;letter-spacing:0.35px">Normal</div>
<div class="tr" style="position:absolute;left:39px;top:88.95px;">Microsoft Word Objects</div>
<div class="tr" style="position:absolute;left:50.8px;top:98.7px;">ThisDocument</div>
<div class="tr" style="position:absolute;left:39px;top:108.45px;">Modules</div>
<div class="tr" style="position:absolute;left:50.8px;top:118.2px;">NewMacros</div>
<div class="tr tb" style="position:absolute;left:27.7px;top:127.95px;letter-spacing:0.35px;word-spacing:1.2px">Project (!2 2 МетУказ по ЛР)</div>
<div class="tr" style="position:absolute;left:39px;top:137.7px;">Microsoft Word Objects</div>
<div class="tr" style="position:absolute;left:50.8px;top:147.45px;">ThisDocument</div>
<div class="tr" style="position:absolute;left:39px;top:157.2px;">Modules</div>
<div class="tr" style="position:absolute;left:50.8px;top:166.95px;">Module1</div>
<div class="tr" style="position:absolute;left:50.8px;top:176.7px;">Module2</div>
<div class="tr" style="position:absolute;left:50.8px;top:186.45px;">Module3</div>
<div class="tr" style="position:absolute;left:39px;top:196.2px;">References</div>
<div class="tr tb" style="position:absolute;left:27.7px;top:205.95px;letter-spacing:0.35px;letter-spacing:0.45px">Project (Документ1)</div>
<div class="tr" style="position:absolute;left:39px;top:215.7px;">Microsoft Word Objects</div>
<div class="tr" style="position:absolute;left:50.8px;top:225.45px;">ThisDocument</div>
<div class="tr" style="position:absolute;left:39px;top:235.2px;">References</div>
<div class="tr tb" style="position:absolute;left:27.7px;top:244.95px;letter-spacing:0.35px">Project (Пирогова)</div>
<div class="tr" style="position:absolute;left:39px;top:254.7px;">Microsoft Word Objects</div>
<div class="tr" style="position:absolute;left:50.8px;top:264.45px;">ThisDocument</div>
<div class="tr" style="position:absolute;left:39px;top:274.2px;">References</div>
<div class="a" style="left:3px;top:450.6px;width:618px;height:1.4px;background:#d8e4f8"></div>
<div class="a" style="left:0px;top:452px;width:624px;height:2.7px;background:#0a28a8"></div>
<div class="a" style="left:0px;top:454.7px;width:624px;height:13.3px;background:#edeee0;border-top:1.2px solid #f8f8f2;border-bottom:1.5px solid #7088b8"></div>
<div class="st" style="position:absolute;left:5.8px;top:458px;">Стр.<span style="margin-left:5px">4</span></div>
<div class="st" style="position:absolute;left:47px;top:458px;">Разд 1</div>
<div class="st" style="position:absolute;left:97px;top:458px;">4/12</div>
<div class="st" style="position:absolute;left:126px;top:458px;">На 1,5см</div>
<div class="st" style="position:absolute;left:163.5px;top:458px;">Ст 1</div>
<div class="st" style="position:absolute;left:190.5px;top:458px;">Кол 1</div>
<div class="st dis" style="position:absolute;left:230px;top:458px;">ЗАП</div>
<div class="st dis" style="position:absolute;left:247.4px;top:458px;">ИСПР</div>
<div class="st dis" style="position:absolute;left:271.3px;top:458px;">ВДЛ</div>
<div class="st dis" style="position:absolute;left:291.5px;top:458px;">ЗАМ</div>
<div class="st" style="position:absolute;left:310.8px;top:458px;">английский</div>
<div class="a" style="left:244.5px;top:456px;width:0.8px;height:10px;background:#dedad0"></div>
<div class="a" style="left:268.8px;top:456px;width:0.8px;height:10px;background:#dedad0"></div>
<div class="a" style="left:289.2px;top:456px;width:0.8px;height:10px;background:#dedad0"></div>
<div class="a" style="left:308px;top:456px;width:0.8px;height:10px;background:#dedad0"></div>
<div class="a" style="left:348.5px;top:456px;width:0.8px;height:10px;background:#dedad0"></div>
<div class="a" style="left:375px;top:456px;width:0.8px;height:10px;background:#dedad0"></div>
<div class="a" style="left:381px;top:456px;width:0.8px;height:10px;background:#dedad0"></div>
<div class="a" style="left:406px;top:456px;width:0.8px;height:10px;background:#dedad0"></div>
<div class="a" style="left:426px;top:456px;width:0.8px;height:10px;background:#dedad0"></div>
<div class="a" style="left:443px;top:456px;width:0.8px;height:10px;background:#dedad0"></div>
<svg style="left:358px;top:457px" width="14" height="10"><rect x="0.5" y="1" width="8" height="7.5" fill="#f4f4f0" stroke="#303030" stroke-width="0.8"/><path d="M2 3 H7 M2 5 H7" stroke="#606060" stroke-width="0.7"/><path d="M8 2 L12.5 7.5 M12.5 2 L8 7.5" stroke="#d02020" stroke-width="1.5"/></svg></body></html>
